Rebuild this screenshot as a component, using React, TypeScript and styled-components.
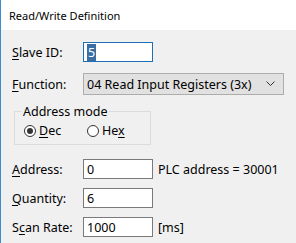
import React from 'react'
import styled, { createGlobalStyle } from 'styled-components'

const Global = createGlobalStyle`
  body {
    margin: 0;
    background: #f0f0f0;
    font-family: "Segoe UI", "Noto Sans", "Liberation Sans", sans-serif;
    font-size: 12.5px;
    color: #000;
  }
`;

const Window = styled.div`
  width: 296px;
  height: 243px;
  box-sizing: border-box;
  border-left: 1px solid #3c8dd0;
  background: #f0f0f0;
  overflow: hidden;
`;

const TitleBar = styled.div`
  height: 30px;
  background: #fff;
  display: flex;
  align-items: center;
  padding-left: 8px;
  font-size: 11px;
`;

const Body = styled.div`
  padding: 12px 0 0 11px;
  display: flex;
  flex-direction: column;
`;

const Row = styled.div<{ gap?: number }>`
  display: flex;
  align-items: center;
  margin-top: ${p => p.gap ?? 0}px;
`;

const Label = styled.span`
  width: 71px;
`;

const Key = styled.span`
  text-decoration: underline;
  text-underline-offset: 2px;
`;

const TextBox = styled.div<{ focused?: boolean }>`
  width: 70px;
  height: 20px;
  box-sizing: border-box;
  border: 1px solid ${p => p.focused ? '#1f6fb5' : '#7a7a7a'};
  background: #fff;
  display: flex;
  align-items: center;
  padding-left: 3px;
`;

const Selected = styled.span`
  background: #3a6ea5;
  color: #fff;
  padding: 0 1px;
`;

const Select = styled.div`
  width: 201px;
  height: 22px;
  box-sizing: border-box;
  border: 1px solid #adadad;
  background: #e1e1e1;
  display: flex;
  align-items: center;
  justify-content: space-between;
  padding: 0 8px 0 3px;
`;

const Note = styled.span`
  margin-left: 5px;
`;

const Group = styled.fieldset`
  margin: 8px 0 0 2px;
  width: 135px;
  height: 42px;
  box-sizing: border-box;
  border: 1px solid #dcdcdc;
  padding: 2px 0 0 9px;
  display: flex;
  align-items: center;
`;

const Legend = styled.legend`
  padding: 0 1px;
  margin-left: -2px;
`;

const Radio = styled.label`
  display: flex;
  align-items: center;
  gap: 3px;
  width: 63px;
`;

const Circle = styled.span<{ checked?: boolean }>`
  width: 12px;
  height: 12px;
  box-sizing: border-box;
  border: 1px solid #333;
  border-radius: 50%;
  background: #fff;
  display: flex;
  align-items: center;
  justify-content: center;
  &::after {
    content: '';
    width: 6px;
    height: 6px;
    border-radius: 50%;
    background: ${p => p.checked ? '#333' : 'transparent'};
  }
`;

export default function App() {
  return (
    <Window>
      <Global />
      <TitleBar>Read/Write Definition</TitleBar>
      <Body>
        <Row>
          <Label><Key>S</Key>lave ID:</Label>
          <TextBox focused><Selected>5</Selected></TextBox>
        </Row>
        <Row gap={11}>
          <Label><Key>F</Key>unction:</Label>
          <Select>
            <span>04 Read Input Registers (3x)</span>
            <svg width="9" height="6" viewBox="0 0 9 6">
              <path d="M0.5 0.5 L4.5 4.5 L8.5 0.5" fill="none" stroke="#333" strokeWidth="1" />
            </svg>
          </Select>
        </Row>
        <Group>
          <Legend>Address mode</Legend>
          <Radio><Circle checked /><span><Key>D</Key>ec</span></Radio>
          <Radio><Circle /><span>He<Key>x</Key></span></Radio>
        </Group>
        <Row gap={14}>
          <Label><Key>A</Key>ddress:</Label>
          <TextBox>0</TextBox>
          <Note>PLC address = 30001</Note>
        </Row>
        <Row gap={9}>
          <Label><Key>Q</Key>uantity:</Label>
          <TextBox>6</TextBox>
        </Row>
        <Row gap={9}>
          <Label>S<Key>c</Key>an Rate:</Label>
          <TextBox>1000</TextBox>
          <Note>[ms]</Note>
        </Row>
      </Body>
    </Window>
  )
}
